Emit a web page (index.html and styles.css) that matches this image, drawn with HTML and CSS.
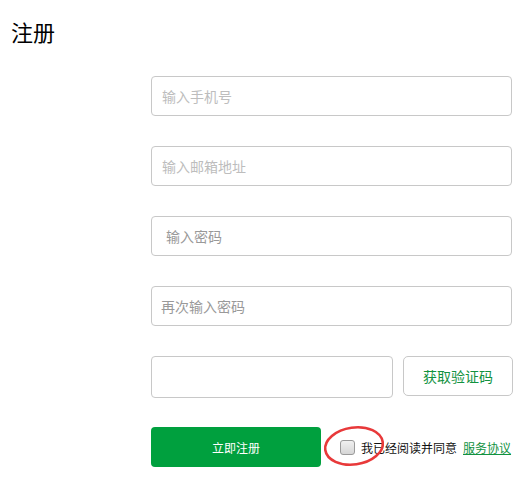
FILE: index.html
```html
<!DOCTYPE html>
<html lang="zh-CN">
<head>
<meta charset="utf-8">
<title>注册</title>
<link rel="stylesheet" href="styles.css">
</head>
<body>
<h1 class="title">注册</h1>
<form class="form">
  <input class="field" type="text" placeholder="输入手机号">
  <input class="field" type="text" placeholder="输入邮箱地址">
  <input class="field field-indent" type="password" placeholder="输入密码">
  <input class="field field-tight" type="password" placeholder="再次输入密码">
  <div class="code-row">
    <input class="field code-input" type="text">
    <button type="button" class="code-btn">获取验证码</button>
  </div>
  <div class="submit-row">
    <button type="button" class="submit-btn">立即注册</button>
    <label class="agree">
      <span class="check-wrap">
        <input type="checkbox" class="check">
        <svg class="circle" width="70" height="48" viewBox="0 0 70 48"><ellipse cx="35" cy="24" rx="29" ry="18.5" transform="rotate(-8 35 24)" fill="none" stroke="#e8393a" stroke-width="2.6"/></svg>
      </span>
      <span class="agree-text">我已经阅读并同意</span>
      <a class="link" href="#">服务协议</a>
    </label>
  </div>
</form>
</body>
</html>
```
FILE: styles.css
```css
* { box-sizing: border-box; }
html, body { margin: 0; padding: 0; background: #fff; }
body {
  width: 520px;
  height: 488px;
  overflow: hidden;
  font-family: "Noto Sans CJK SC", "Noto Sans", sans-serif;
  color: #000;
}
.title {
  margin: 16px 0 0 11px;
  font-size: 22px;
  line-height: 30px;
  font-weight: normal;
}
.form {
  margin: 30px 0 0 151px;
  width: 361px;
  display: flex;
  flex-direction: column;
  gap: 30px;
}
.field {
  display: block;
  width: 361px;
  height: 40px;
  margin: 0;
  border: 1px solid #c8c8c8;
  border-radius: 4px;
  padding: 0 10px;
  font-family: inherit;
  font-size: 14px;
  color: #333;
  outline: none;
  background: #fff;
}
.field::placeholder { color: #bdbdbd; }
.field-indent { padding-left: 14px; }
.field-indent::placeholder { color: #999; }
.field-tight { padding-left: 9px; }
.field-tight::placeholder { color: #999; }
.code-row {
  display: flex;
  justify-content: space-between;
  align-items: flex-start;
}
.code-input { width: 242px; height: 42px; }
.code-btn {
  width: 110px;
  height: 40px;
  margin-right: -1px;
  border: 1px solid #c8c8c8;
  border-radius: 5px;
  background: #fff;
  color: #12923f;
  font-family: inherit;
  font-size: 14px;
  padding: 0;
}
.submit-row {
  display: flex;
  align-items: center;
  margin-top: -1px;
}
.submit-btn {
  width: 170px;
  height: 40px;
  border: none;
  border-radius: 4px;
  background: #00a03e;
  color: #fff;
  font-family: inherit;
  font-size: 12px;
  padding: 0;
}
.agree {
  display: flex;
  align-items: center;
  font-size: 12px;
  margin-left: 19px;
}
.check-wrap {
  position: relative;
  width: 15px;
  height: 15px;
  margin-right: 6px;
}
.check {
  appearance: none;
  -webkit-appearance: none;
  display: block;
  margin: 0;
  width: 15px;
  height: 15px;
  border: 1px solid #9a9a9a;
  border-radius: 3px;
  background: linear-gradient(#f0f0f0, #d6d6d6);
}
.circle {
  position: absolute;
  left: -21px;
  top: -18px;
  pointer-events: none;
}
.agree-text { color: #111; }
.link {
  margin-left: 6px;
  color: #12923f;
  text-decoration: underline;
}
```
